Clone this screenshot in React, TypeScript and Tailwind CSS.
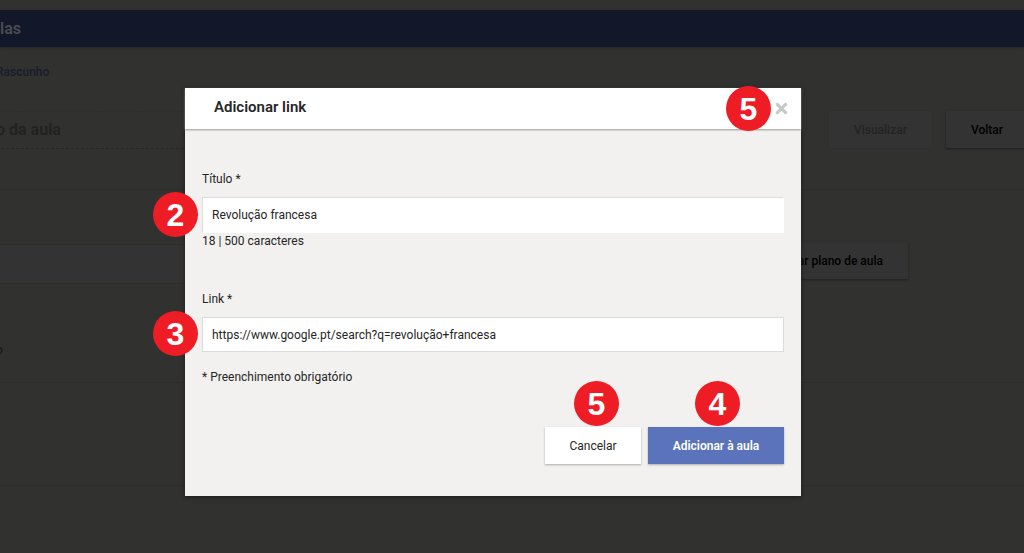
import type { ReactNode } from "react";
import { FaTimes } from "react-icons/fa";

function Badge({ value, className }: { value: number; className: string }) {
  return (
    <span
      className={`absolute z-10 flex size-[45px] items-center justify-center rounded-full bg-[#ee1c25] font-['Liberation_Sans',Arial,sans-serif] text-[32px] leading-none font-bold text-white ${className}`}
    >
      {value}
    </span>
  );
}

function Field({
  id,
  label,
  value,
  step,
  inputClass,
}: {
  id: string;
  label: string;
  value: string;
  step: number;
  inputClass: string;
}) {
  return (
    <div>
      <label htmlFor={id} className="block leading-5">
        {label}
      </label>
      <div className="relative mt-2">
        <input
          id={id}
          type="text"
          defaultValue={value}
          className={`block w-full border bg-white px-[9px] outline-none ${inputClass}`}
        />
        <Badge value={step} className="right-full bottom-[-4px] mr-1" />
      </div>
    </div>
  );
}

function DimButton({ children, className }: { children: ReactNode; className: string }) {
  return (
    <button
      type="button"
      className={`h-[37px] bg-[#333333] px-[25px] font-medium whitespace-nowrap ${className}`}
    >
      {children}
    </button>
  );
}

function LessonPage() {
  return (
    <div className="min-h-screen overflow-hidden pt-[10px] text-[#111111]">
      <header className="flex h-[37px] items-center bg-[#121829] text-base font-semibold text-[#4b4c50] shadow-[0_1px_2px_#252525]">
        las
      </header>
      <main>
        <p className="-ml-1 pt-[15px] leading-5 font-medium text-[#191c2b]">Rascunho</p>
        <div className="mt-[29px] flex h-[79px] items-start justify-between border-b border-[#2d2d2b]">
          <h1 className="-ml-1 h-[38px] w-1/2 border-y border-dashed border-t-[#2e2e2c] border-b-[#262625] text-base leading-9 font-semibold text-[#222221]">
            o da aula
          </h1>
          <div className="-mr-1 flex gap-3.5">
            <DimButton className="text-[#242423] shadow-[0_0_1px_#2b2b2a]">Visualizar</DimButton>
            <DimButton className="text-black shadow-[0_1px_2px_#1c1c1c]">Voltar</DimButton>
          </div>
        </div>
        <section className="h-[193px] border-b border-[#2d2d2b] pt-[52px]">
          <div className="flex items-start pr-[116px]">
            <div className="mt-0.5 h-10 flex-1 border-y border-[#2d2d2e] bg-[#333333]" />
            <DimButton className="text-black shadow-[0_1px_2px_#1f1f1f]">
              Criar plano de aula
            </DimButton>
          </div>
          <p className="-ml-1 pt-14 leading-5">o</p>
        </section>
        <div className="h-[103px] border-b border-[#2d2d2b]" />
      </main>
    </div>
  );
}

export default function App() {
  return (
    <div className="relative bg-[#31312f] font-['Roboto',sans-serif] text-xs">
      <LessonPage />
      <div className="absolute inset-0 flex items-start justify-center pt-[88px] pr-[38px]">
        <div
          role="dialog"
          aria-labelledby="dialog-title"
          className="w-full max-w-[616px] bg-[#f2f1ef] text-[#262626] shadow-[0_1px_4px_#1c1c1c]"
        >
          <div className="relative flex h-[41px] items-center justify-between bg-white pr-[11px] pl-[29px] shadow-[0_1px_2px_#999999]">
            <h2 id="dialog-title" className="pb-0.5 text-[15px] font-semibold">
              Adicionar link
            </h2>
            <button type="button" aria-label="Fechar" className="text-[#c8c8c8]">
              <FaTimes size={17} />
            </button>
            <Badge value={5} className="-top-0.5 right-[30px]" />
          </div>
          <form className="px-[17px] pt-10 pb-8" onSubmit={(e) => e.preventDefault()}>
            <Field
              id="titulo"
              label="Título *"
              value="Revolução francesa"
              step={2}
              inputClass="h-9 border-white border-t-[#dddddf] border-l-[#dddde2]"
            />
            <p className="mb-10 leading-4">18 | 500 caracteres</p>
            <Field
              id="link"
              label="Link *"
              value="https://www.google.pt/search?q=revolução+francesa"
              step={3}
              inputClass="h-[35px] border-[#d9dcda]"
            />
            <p className="mt-[15px] leading-5">* Preenchimento obrigatório</p>
            <div className="mt-10 flex justify-end gap-[7px]">
              <div className="relative">
                <button
                  type="button"
                  className="h-[37px] w-24 bg-white shadow-[0_1px_2px_#aaaaaa]"
                >
                  Cancelar
                </button>
                <Badge value={5} className="right-[22px] bottom-full mb-px" />
              </div>
              <div className="relative">
                <button
                  type="submit"
                  className="h-[37px] w-[136px] bg-[#5b73bb] font-semibold text-white shadow-[0_1px_2px_#aaaaaa]"
                >
                  Adicionar à aula
                </button>
                <Badge value={4} className="right-11 bottom-full mb-px" />
              </div>
            </div>
          </form>
        </div>
      </div>
    </div>
  );
}
